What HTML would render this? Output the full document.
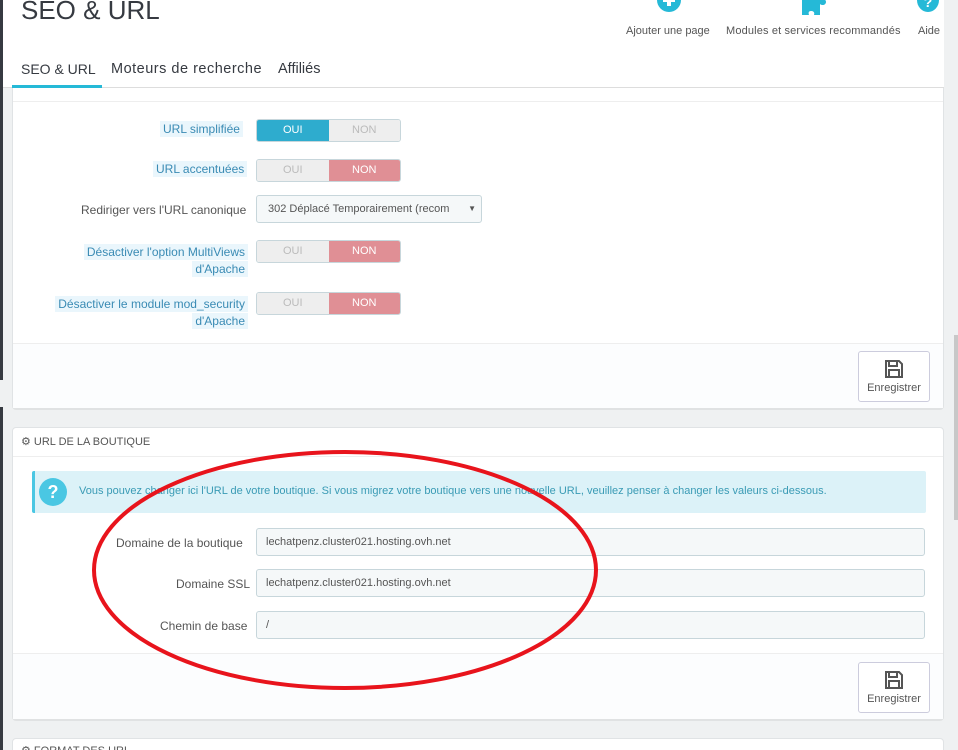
<!DOCTYPE html><html><head><meta charset="utf-8"><style>
*{box-sizing:border-box;margin:0;padding:0}
html,body{width:958px;height:750px;overflow:hidden}
body{background:#eff1f2;font-family:"Liberation Sans",sans-serif;position:relative;color:#555}
.a{position:absolute}
.panel{position:absolute;left:12px;width:932px;background:#fff;border:1px solid #e0e3e5;border-radius:4px;box-shadow:0 2px 0 rgba(0,0,0,.06)}
.lbl{position:absolute;font-size:12px;text-align:right;color:#555}
.hl{background:#eaf6fc;color:#3a8bb4;padding:1px 3px}
.sw{position:absolute;left:256px;width:145px;height:23px;border:1px solid #c7d6db;border-radius:3px;display:flex;font-size:11px;overflow:hidden}
.sw span{flex:1;text-align:center;line-height:21px;background:#eee;color:#bbb}
.sw .on{background:#2eacce;color:#fff}
.sw .no{background:#e08f95;color:#fff}
.inp{position:absolute;left:256px;width:669px;height:28px;background:#f5f8f9;border:1px solid #c7d6db;border-radius:3px;font-size:11px;line-height:26px;padding-left:9px;color:#555}
.btn{position:absolute;left:858px;width:72px;height:51px;background:#fff;border:1px solid #ccd;border-radius:3px;text-align:center;font-size:11px;color:#555}
.foot{position:absolute;left:0;right:0;background:#fcfdfe;border-top:1px solid #eee}
</style></head><body>
<div class="a" style="left:0;top:0;width:3px;height:380px;background:#363a41"></div>
<div class="a" style="left:0;top:407px;width:3px;height:343px;background:#363a41"></div>
<div class="a" style="left:954px;top:335px;width:4px;height:185px;background:#c8c8c8"></div>

<!-- panel 1 -->
<div class="panel" style="top:60px;height:348px">
<div class="a" style="left:0;right:0;top:40px;border-top:1px solid #eee"></div>
<div class="foot" style="top:282px;height:65px"></div>
</div>
<div class="lbl" style="left:160px;top:122px"><span class="hl">URL simplifiée</span></div>
<div class="sw" style="top:119px"><span class="on">OUI</span><span>NON</span></div>
<div class="lbl" style="left:153px;top:162px"><span class="hl">URL accentuées</span></div>
<div class="sw" style="top:159px"><span>OUI</span><span class="no">NON</span></div>
<div class="lbl" style="left:81px;top:203px">Rediriger vers l'URL canonique</div>
<div class="a" style="left:256px;top:195px;width:226px;height:28px;background:#f5f8f9;border:1px solid #c7d6db;border-radius:3px;font-size:11px;line-height:26px;padding-left:11px;color:#555">302 Déplacé Temporairement (recom<span style="position:absolute;right:5px;font-size:8px">▼</span></div>
<div class="lbl" style="left:80px;top:244px;width:168px;line-height:17px"><span class="hl">Désactiver l'option MultiViews</span><br><span class="hl">d'Apache</span></div>
<div class="sw" style="top:240px"><span>OUI</span><span class="no">NON</span></div>
<div class="lbl" style="left:52px;top:296px;width:196px;line-height:17px"><span class="hl">Désactiver le module mod_security</span><br><span class="hl">d'Apache</span></div>
<div class="sw" style="top:292px"><span>OUI</span><span class="no">NON</span></div>
<div class="btn" style="top:351px"><svg width="20" height="20" viewBox="0 0 20 20" style="margin-top:7px"><path d="M2 2h13l3 3v13H2z M5 2v5h8V2 M5 18v-7h10v7" fill="none" stroke="#555" stroke-width="2"/></svg><div>Enregistrer</div></div>

<!-- header -->
<div class="a" style="left:3px;top:0;width:941px;height:88px;background:#fff;border-bottom:1px solid #ddd"></div>
<div class="a" style="left:21px;top:-5px;font-size:26px;color:#363a41">SEO &amp; URL</div>
<div class="a" style="left:657px;top:-12px;width:24px;height:24px;border-radius:50%;background:#25b9d7"></div>
<div class="a" style="left:667px;top:-6px;width:4px;height:12px;background:#fff"></div>
<div class="a" style="left:663px;top:-2px;width:12px;height:4px;background:#fff"></div>
<div class="a" style="left:626px;top:25px;font-size:11px;color:#555">Ajouter une page</div>
<svg class="a" style="left:800px;top:-6px" width="28" height="22" viewBox="0 0 28 22"><path d="M2 0h18v6c2-2 6-1 6 2s-4 4-6 2v11h-6c1-3-1-4-3-4s-3 1-2 4H2z" fill="#25b9d7"/></svg>
<div class="a" style="left:726px;top:25px;font-size:11px;color:#555;letter-spacing:.15px">Modules et services recommandés</div>
<div class="a" style="left:917px;top:-12px;width:22px;height:24px;border-radius:50%;background:#25b9d7;color:#fff;font-size:14px;font-weight:bold;text-align:center;line-height:28px">?</div>
<div class="a" style="left:918px;top:25px;font-size:11px;color:#555">Aide</div>
<div class="a" style="left:21px;top:61px;font-size:14px;color:#363a41">SEO &amp; URL</div>
<div class="a" style="left:12px;top:85px;width:90px;height:3px;background:#25b9d7"></div>
<div class="a" style="left:111px;top:61px;font-size:14.5px;color:#363a41;letter-spacing:.5px">Moteurs de recherche</div>
<div class="a" style="left:278px;top:61px;font-size:14.5px;color:#363a41">Affiliés</div>

<!-- panel 2 -->
<div class="panel" style="top:427px;height:292px">
<div class="a" style="left:8px;top:7px;font-size:11px;color:#555">⚙ URL DE LA BOUTIQUE</div>
<div class="a" style="left:0;right:0;top:28px;border-top:1px solid #eee"></div>
<div class="a" style="left:19px;top:43px;width:894px;height:42px;background:#dcf2f8;border-left:3px solid #4ac7e3;border-radius:2px"></div>
<div class="a" style="left:26px;top:50px;width:28px;height:28px;border-radius:50%;background:#4ac7e3;color:#fff;font-weight:bold;font-size:18px;text-align:center;line-height:28px">?</div>
<div class="a" style="left:66px;top:57px;font-size:11px;color:#3a9bb5">Vous pouvez changer ici l'URL de votre boutique. Si vous migrez votre boutique vers une nouvelle URL, veuillez penser à changer les valeurs ci-dessous.</div>
<div class="foot" style="top:225px;height:66px"></div>
</div>
<div class="lbl" style="left:116px;top:536px">Domaine de la boutique</div>
<div class="inp" style="top:528px">lechatpenz.cluster021.hosting.ovh.net</div>
<div class="lbl" style="left:176px;top:577px">Domaine SSL</div>
<div class="inp" style="top:569px">lechatpenz.cluster021.hosting.ovh.net</div>
<div class="lbl" style="left:160px;top:619px">Chemin de base</div>
<div class="inp" style="top:611px">/</div>
<div class="btn" style="top:662px"><svg width="20" height="20" viewBox="0 0 20 20" style="margin-top:7px"><path d="M2 2h13l3 3v13H2z M5 2v5h8V2 M5 18v-7h10v7" fill="none" stroke="#555" stroke-width="2"/></svg><div>Enregistrer</div></div>

<div class="panel" style="top:738px;height:40px"><div class="a" style="left:8px;top:5px;font-size:11px">⚙ FORMAT DES URL</div></div>

<svg class="a" style="left:0;top:0" width="958" height="750"><ellipse cx="345" cy="570" rx="251" ry="118" fill="none" stroke="#e8141c" stroke-width="4"/></svg>
</body></html>
